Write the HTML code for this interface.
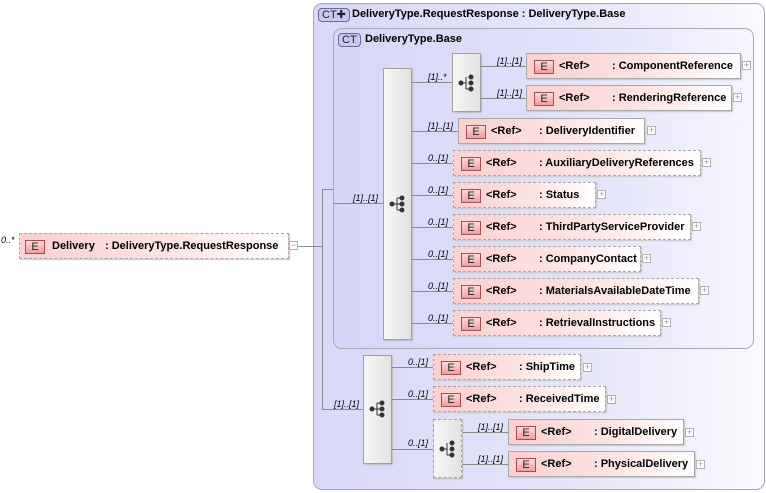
<!DOCTYPE html>
<html><head><meta charset="utf-8"><style>
*{margin:0;padding:0;box-sizing:border-box}
body{width:766px;height:493px;background:#fff;position:relative;overflow:hidden;font-family:"Liberation Sans",sans-serif;font-size:11px;color:#000}
.a{position:absolute}
.ct{position:absolute;border:1px solid #a8a8b8;border-radius:9px;background:linear-gradient(90deg,#d8d8f8 0%,#e6e6fa 60%,#fafaff 100%)}
.ct2{position:absolute;border:1px solid #a8a8b8;border-radius:9px;background:linear-gradient(90deg,#d6d6f8 0%,#e2e2fa 60%,#f6f6ff 100%)}
.badge{position:absolute;height:14px;border:1px solid #6a6a90;border-radius:4px;background:#c8c8f0;font-size:11px;line-height:12px;padding:0 3px;color:#222}
.t{position:absolute;font-weight:bold;white-space:nowrap}
.el{position:absolute;height:26px;border:1px solid #a8a8a8;background:linear-gradient(90deg,#fcd0d0 0%,#fde2e2 55%,#fff 100%);box-shadow:1px 1px 1px #c8c8c8}
.d{border:1px dashed #a8a8a8}
.E{position:absolute;left:7px;top:6px;width:20px;height:14px;border:1px solid #a05050;background:linear-gradient(#ffd8d8,#f0a0a0);font-size:11px;line-height:12px;text-align:center;color:#222}
.el span{position:absolute;top:6px;font-weight:bold;white-space:nowrap}
.p{position:absolute;width:9px;height:9px;border:1px solid #b0b0b0;background:#fff;font-size:9px;line-height:7px;text-align:center;color:#999}
.sq{position:absolute;border:1px solid #a0a0a0;background:linear-gradient(90deg,#f6f6f6,#e2e2e2);box-shadow:1px 1px 1px #bbb}
.ln{position:absolute;background:#8a8a8a}
.c{position:absolute;font-size:9px;font-style:italic;white-space:nowrap}
</style></head><body>

<div class="ct" style="left:313px;top:3px;width:452px;height:487px"></div>
<div class="badge" style="left:318px;top:8px">CT✚</div>
<div class="t" style="left:352px;top:8px">DeliveryType.RequestResponse : DeliveryType.Base</div>

<div class="ct2" style="left:333px;top:28px;width:421px;height:321px"></div>
<div class="badge" style="left:338px;top:33px">CT</div>
<div class="t" style="left:365px;top:33px">DeliveryType.Base</div>

<div class="ln" style="left:298px;top:246px;width:25px;height:1px"></div>
<div class="ln" style="left:322px;top:189px;width:1px;height:221px"></div>
<div class="ln" style="left:322px;top:189px;width:11px;height:1px"></div>
<div class="ln" style="left:333px;top:203px;width:50px;height:1px"></div>
<div class="ln" style="left:322px;top:409px;width:41px;height:1px"></div>
<div class="c" style="left:353px;top:193px">[1]..[1]</div>
<div class="c" style="left:334px;top:399px">[1]..[1]</div>

<div class="sq" style="left:383px;top:68px;width:29px;height:272px"></div>
<svg class="a" style="left:389px;top:195px" width="18" height="18"><g fill="#333" stroke="#333"><circle cx="3" cy="9" r="2"/><line x1="3" y1="9" x2="8" y2="9"/><line x1="8" y1="3" x2="8" y2="15"/><line x1="8" y1="3" x2="13" y2="3"/><line x1="8" y1="9" x2="13" y2="9"/><line x1="8" y1="15" x2="13" y2="15"/><circle cx="13" cy="3" r="2"/><circle cx="13" cy="9" r="2"/><circle cx="13" cy="15" r="2"/></g></svg>

<div class="ln" style="left:412px;top:82px;width:40px;height:1px"></div>
<div class="c" style="left:428px;top:72px">[1]..*</div>
<div class="sq" style="left:452px;top:53px;width:29px;height:59px"></div>
<svg class="a" style="left:458px;top:74px" width="18" height="18"><g fill="#333" stroke="#333"><circle cx="3" cy="9" r="2"/><line x1="3" y1="9" x2="8" y2="9"/><line x1="8" y1="3" x2="8" y2="15"/><line x1="8" y1="15" x2="13" y2="15"/><circle cx="13" cy="3" r="2"/><circle cx="13" cy="9" r="2"/><circle cx="13" cy="15" r="2"/></g></svg>
<div class="ln" style="left:481px;top:66px;width:45px;height:1px"></div>
<div class="ln" style="left:481px;top:98px;width:45px;height:1px"></div>
<div class="c" style="left:497px;top:56px">[1]..[1]</div>
<div class="c" style="left:497px;top:88px">[1]..[1]</div>

<div class="el" style="left:526px;top:53px;width:215px"><div class="E">E</div><span style="left:32px">&lt;Ref&gt;</span><span style="left:85px">: ComponentReference</span></div><div class="p" style="left:742px;top:61px">+</div>
<div class="el" style="left:526px;top:85px;width:206px"><div class="E">E</div><span style="left:32px">&lt;Ref&gt;</span><span style="left:85px">: RenderingReference</span></div><div class="p" style="left:733px;top:93px">+</div>

<div class="ln" style="left:412px;top:131px;width:46px;height:1px"></div><div class="c" style="left:428px;top:121px">[1]..[1]</div>
<div class="el" style="left:458px;top:118px;width:187px"><div class="E">E</div><span style="left:32px">&lt;Ref&gt;</span><span style="left:80px">: DeliveryIdentifier</span></div><div class="p" style="left:647px;top:126px">+</div>

<div class="ln" style="left:412px;top:163px;width:41px;height:1px"></div><div class="c" style="left:428px;top:153px">0..[1]</div>
<div class="el d" style="left:453px;top:150px;width:248px"><div class="E">E</div><span style="left:32px">&lt;Ref&gt;</span><span style="left:85px">: AuxiliaryDeliveryReferences</span></div><div class="p" style="left:702px;top:158px">+</div>

<div class="ln" style="left:412px;top:195px;width:41px;height:1px"></div><div class="c" style="left:428px;top:185px">0..[1]</div>
<div class="el d" style="left:453px;top:182px;width:143px"><div class="E">E</div><span style="left:32px">&lt;Ref&gt;</span><span style="left:85px">: Status</span></div><div class="p" style="left:597px;top:190px">+</div>

<div class="ln" style="left:412px;top:227px;width:41px;height:1px"></div><div class="c" style="left:428px;top:217px">0..[1]</div>
<div class="el d" style="left:453px;top:214px;width:238px"><div class="E">E</div><span style="left:32px">&lt;Ref&gt;</span><span style="left:85px">: ThirdPartyServiceProvider</span></div><div class="p" style="left:692px;top:222px">+</div>

<div class="ln" style="left:412px;top:259px;width:41px;height:1px"></div><div class="c" style="left:428px;top:249px">0..[1]</div>
<div class="el d" style="left:453px;top:246px;width:188px"><div class="E">E</div><span style="left:32px">&lt;Ref&gt;</span><span style="left:85px">: CompanyContact</span></div><div class="p" style="left:642px;top:254px">+</div>

<div class="ln" style="left:412px;top:291px;width:41px;height:1px"></div><div class="c" style="left:428px;top:281px">0..[1]</div>
<div class="el d" style="left:453px;top:278px;width:246px"><div class="E">E</div><span style="left:32px">&lt;Ref&gt;</span><span style="left:85px">: MaterialsAvailableDateTime</span></div><div class="p" style="left:700px;top:286px">+</div>

<div class="ln" style="left:412px;top:323px;width:41px;height:1px"></div><div class="c" style="left:428px;top:313px">0..[1]</div>
<div class="el d" style="left:453px;top:310px;width:208px"><div class="E">E</div><span style="left:32px">&lt;Ref&gt;</span><span style="left:85px">: RetrievalInstructions</span></div><div class="p" style="left:662px;top:318px">+</div>

<div class="sq" style="left:363px;top:355px;width:29px;height:109px"></div>
<svg class="a" style="left:369px;top:400px" width="18" height="18"><g fill="#333" stroke="#333"><circle cx="3" cy="9" r="2"/><line x1="3" y1="9" x2="8" y2="9"/><line x1="8" y1="3" x2="8" y2="15"/><line x1="8" y1="3" x2="13" y2="3"/><line x1="8" y1="9" x2="13" y2="9"/><line x1="8" y1="15" x2="13" y2="15"/><circle cx="13" cy="3" r="2"/><circle cx="13" cy="9" r="2"/><circle cx="13" cy="15" r="2"/></g></svg>

<div class="ln" style="left:392px;top:367px;width:41px;height:1px"></div><div class="c" style="left:408px;top:357px">0..[1]</div>
<div class="el d" style="left:433px;top:354px;width:148px"><div class="E">E</div><span style="left:32px">&lt;Ref&gt;</span><span style="left:85px">: ShipTime</span></div><div class="p" style="left:583px;top:363px">+</div>

<div class="ln" style="left:392px;top:399px;width:41px;height:1px"></div><div class="c" style="left:408px;top:389px">0..[1]</div>
<div class="el d" style="left:433px;top:386px;width:173px"><div class="E">E</div><span style="left:32px">&lt;Ref&gt;</span><span style="left:85px">: ReceivedTime</span></div><div class="p" style="left:607px;top:395px">+</div>

<div class="ln" style="left:392px;top:449px;width:41px;height:1px"></div><div class="c" style="left:408px;top:438px">0..[1]</div>
<div class="sq" style="left:433px;top:419px;width:29px;height:59px;border-style:dashed"></div>
<svg class="a" style="left:439px;top:440px" width="18" height="18"><g fill="#333" stroke="#333"><circle cx="3" cy="9" r="2"/><line x1="3" y1="9" x2="8" y2="9"/><line x1="8" y1="3" x2="8" y2="15"/><line x1="8" y1="15" x2="13" y2="15"/><circle cx="13" cy="3" r="2"/><circle cx="13" cy="9" r="2"/><circle cx="13" cy="15" r="2"/></g></svg>
<div class="ln" style="left:462px;top:432px;width:46px;height:1px"></div><div class="c" style="left:478px;top:422px">[1]..[1]</div>
<div class="ln" style="left:462px;top:464px;width:46px;height:1px"></div><div class="c" style="left:478px;top:454px">[1]..[1]</div>
<div class="el" style="left:508px;top:419px;width:176px"><div class="E">E</div><span style="left:32px">&lt;Ref&gt;</span><span style="left:85px">: DigitalDelivery</span></div><div class="p" style="left:685px;top:428px">+</div>
<div class="el" style="left:508px;top:451px;width:187px"><div class="E">E</div><span style="left:32px">&lt;Ref&gt;</span><span style="left:85px">: PhysicalDelivery</span></div><div class="p" style="left:696px;top:460px">+</div>

<div class="c" style="left:1px;top:235px">0..*</div>
<div class="el d" style="left:19px;top:233px;width:270px"><div class="E" style="left:5px">E</div><span style="left:32px">Delivery</span><span style="left:85px">: DeliveryType.RequestResponse</span></div>
<div class="p" style="left:289px;top:241px">−</div>
</body></html>
